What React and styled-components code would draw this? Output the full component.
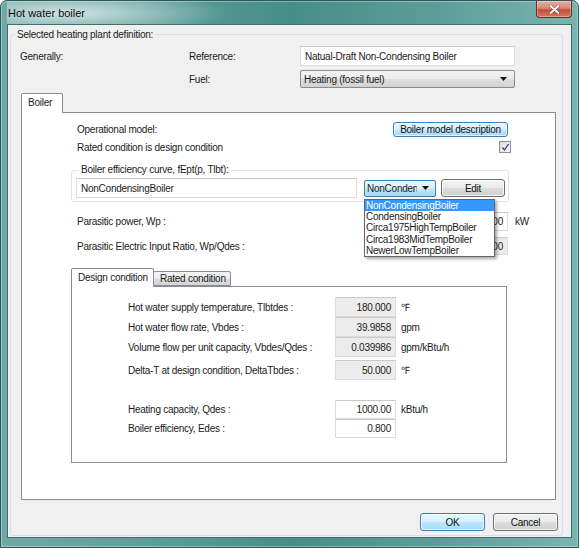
import React from 'react';
import styled, { createGlobalStyle } from 'styled-components';

const GlobalStyle = createGlobalStyle`
  html, body {
    margin: 0;
    padding: 0;
    background: #ffffff;
  }
  body {
    font-family: "Liberation Sans", Arial, sans-serif;
    font-size: 10px;
    letter-spacing: -0.25px;
    color: #1b1b1b;
  }
  * {
    box-sizing: border-box;
  }
`;

const Window = styled.div`
  width: 579px;
  height: 548px;
  display: flex;
  flex-direction: column;
  padding: 0 6px 9px 6px;
  border: 1px solid #2b5856;
  border-radius: 7px 7px 0 0;
  background: linear-gradient(90deg, #6fa9a6 0%, #5f9f9b 25%, #468d87 50%, #5d9d99 75%, #79b4b1 100%);
  box-shadow: inset 0 0 0 1px rgba(255, 255, 255, 0.35);
`;

const TitleBar = styled.div`
  height: 23px;
  display: flex;
  align-items: center;
  justify-content: space-between;
  background: radial-gradient(ellipse 160px 22px at 60px 12px, rgba(226, 238, 237, 0.85), rgba(226, 238, 237, 0) 100%);
`;

const Title = styled.span`
  padding-left: 1px;
  font-size: 11px;
  letter-spacing: 0;
  color: #0c0c0c;
`;

const CloseButton = styled.div`
  width: 36px;
  height: 17px;
  margin-top: -6px;
  display: flex;
  align-items: center;
  justify-content: center;
  border: 1px solid #6e2a1f;
  border-top: none;
  border-radius: 0 0 4px 4px;
  background: linear-gradient(#e6b0a4 0%, #d58875 45%, #c2503b 55%, #d4775f 100%);
  box-shadow: inset 0 0 0 1px rgba(255, 255, 255, 0.35);
`;

const Client = styled.div`
  flex: 1;
  display: flex;
  padding: 3px 8px 1px 2px;
  border: 1px solid #3f6e6c;
  background: #f0f0f0;
`;

const GroupBox = styled.fieldset`
  flex: 1;
  min-width: 0;
  margin: 0;
  padding: ${props => props.$padding || '0'};
  display: flex;
  flex-direction: column;
  border: 1px solid ${props => props.$line || '#d5dfe5'};
  border-radius: 3px;
`;

const Legend = styled.legend`
  margin-left: ${props => props.$offset || 4}px;
  padding: 0 2px;
  line-height: ${props => props.$lineHeight || 13}px;
  color: #1b1b1b;
`;

const HeaderGrid = styled.div`
  display: grid;
  grid-template-columns: 169px 111px 215px;
  grid-template-rows: 20px 18px;
  row-gap: 4px;
  align-items: center;
  margin: 5px 0 0 9px;
`;

const TextField = styled.div`
  height: ${props => props.$height || 20}px;
  width: ${props => (props.$width ? `${props.$width}px` : '100%')};
  display: flex;
  align-items: center;
  justify-content: ${props => (props.$right ? 'flex-end' : 'flex-start')};
  padding: 0 4px;
  border: 1px solid #dcdcdc;
  border-top-color: #c9c9c9;
  background: ${props => (props.$readOnly ? '#ececec' : '#ffffff')};
  white-space: nowrap;
  overflow: hidden;
`;

const SelectBox = styled.div`
  height: 18px;
  display: flex;
  align-items: center;
  justify-content: space-between;
  padding: 0 7px 0 3px;
  border: 1px solid #8b8b8b;
  border-radius: 2px;
  background: linear-gradient(#f4f4f4 0%, #ebebeb 48%, #dedede 52%, #d2d2d2 100%);
`;

const Arrow = () => (
  <svg width="7" height="4" viewBox="0 0 7 4">
    <path d="M0 0 H7 L3.5 4 Z" fill="#111" />
  </svg>
);

const TabControl = styled.div`
  display: flex;
  flex-direction: column;
  flex: ${props => (props.$fill ? 1 : 'none')};
  margin: ${props => props.$margin};
`;

const TabStrip = styled.div`
  height: ${props => props.$height}px;
  display: flex;
  align-items: flex-end;
`;

const Tab = styled.div`
  position: relative;
  z-index: ${props => (props.$active ? 1 : 0)};
  width: ${props => props.$width}px;
  height: ${props => (props.$active ? props.$height + 1 : props.$height - 3)}px;
  margin-bottom: ${props => (props.$active ? -1 : 0)}px;
  margin-left: ${props => (props.$active ? 0 : -1)}px;
  display: flex;
  align-items: center;
  padding: 0 0 ${props => (props.$active ? 2 : 0)}px 6px;
  border: 1px solid #898c95;
  border-bottom: ${props => (props.$active ? 'none' : '1px solid #898c95')};
  border-radius: 2px 2px 0 0;
  background: ${props => (props.$active ? '#ffffff' : 'linear-gradient(#f4f4f4 0%, #ebebeb 50%, #dddddd 51%, #d6d6d6 100%)')};
  color: #1b1b1b;
`;

const TabPanel = styled.div`
  flex: ${props => (props.$fill ? 1 : 'none')};
  height: ${props => (props.$height ? `${props.$height}px` : 'auto')};
  display: flex;
  flex-direction: column;
  padding: ${props => props.$padding};
  border: 1px solid #898c95;
  background: #ffffff;
`;

const Row = styled.div`
  height: ${props => props.$height}px;
  margin-top: ${props => props.$top}px;
  display: flex;
  align-items: center;
  justify-content: space-between;
`;

const Label = styled.span`
  margin-left: 6px;
  white-space: nowrap;
`;

const Button = styled.div`
  width: ${props => props.$width}px;
  height: ${props => props.$height || 18}px;
  margin-right: ${props => props.$right || 0}px;
  display: flex;
  align-items: center;
  justify-content: center;
  border: 1px solid ${props => (props.$focused ? '#3c7fb1' : '#707070')};
  border-radius: 3px;
  background: ${props => (props.$focused
    ? 'linear-gradient(#eaf6fd 0%, #d9f0fc 48%, #bee6fd 52%, #a7d9f5 100%)'
    : 'linear-gradient(#f2f2f2 0%, #ebebeb 48%, #dddddd 52%, #cfcfcf 100%)')};
  box-shadow: inset 0 0 0 1px rgba(255, 255, 255, 0.7);
  color: #111;
  white-space: nowrap;
`;

const CheckBox = styled.div`
  width: 12px;
  height: 12px;
  margin-right: -2px;
  display: flex;
  align-items: center;
  justify-content: center;
  border: 1px solid #8f8f8f;
  background: linear-gradient(135deg, #dcdcdc 0%, #f6f6f6 100%);
`;

const CurveRow = styled.div`
  display: flex;
  align-items: center;
  gap: 0;
  height: 20px;
`;

const ComboWrap = styled.div`
  position: relative;
  width: 72px;
  height: 17px;
  margin-left: 7px;
`;

const Combo = styled.div`
  height: 100%;
  display: flex;
  align-items: center;
  justify-content: space-between;
  padding: 0 6px 0 2px;
  border: 1px solid #3c7fb1;
  border-radius: 2px;
  background: linear-gradient(#eaf6fd 0%, #d9f0fc 48%, #bee6fd 52%, #a7d9f5 100%);
  overflow: hidden;
  white-space: nowrap;
`;

const ComboText = styled.span`
  width: 50px;
  overflow: hidden;
`;

const DropList = styled.div`
  position: absolute;
  top: 19px;
  left: 0;
  z-index: 10;
  width: 131px;
  border: 1px solid #646464;
  background: #ffffff;
  box-shadow: 2px 2px 3px rgba(0, 0, 0, 0.35);
`;

const DropItem = styled.div`
  height: 11.4px;
  line-height: 11.4px;
  padding-left: 1px;
  background: ${props => (props.$selected ? '#3399ff' : 'transparent')};
  color: ${props => (props.$selected ? '#ffffff' : '#1b1b1b')};
  white-space: nowrap;
`;

const ParamRow = styled.div`
  height: ${props => props.$height}px;
  margin-top: ${props => props.$top}px;
  margin-right: -26px;
  display: flex;
  align-items: center;
`;

const ParamLabel = styled(Label)`
  flex: 1;
`;

const Unit = styled.span`
  width: ${props => props.$width || 20}px;
  margin-left: ${props => props.$gap || 7}px;
  white-space: nowrap;
`;

const DataRow = styled.div`
  height: ${props => props.$height || 20}px;
  margin-top: ${props => props.$top || 0}px;
  display: flex;
  align-items: center;
  padding-left: 56px;
`;

const DataLabel = styled.span`
  width: 207px;
  white-space: nowrap;
`;

const FooterRow = styled.div`
  display: flex;
  justify-content: flex-end;
  gap: 8px;
  margin-top: 13px;
  padding: 0 4px 4px 0;
`;

const curves = [
  'NonCondensingBoiler',
  'CondensingBoiler',
  'Circa1975HighTempBoiler',
  'Circa1983MidTempBoiler',
  'NewerLowTempBoiler'
];

const design = [
  { label: 'Hot water supply temperature, Tlbtdes :', value: '180.000', unit: '℉', readOnly: true },
  { label: 'Hot water flow rate, Vbdes :', value: '39.9858', unit: 'gpm', readOnly: true },
  { label: 'Volume flow per unit capacity, Vbdes/Qdes :', value: '0.039986', unit: 'gpm/kBtu/h', readOnly: true },
  { label: 'Delta-T at design condition, DeltaTbdes :', value: '50.000', unit: '℉', readOnly: true, top: 3 },
  { label: 'Heating capacity, Qdes :', value: '1000.00', unit: 'kBtu/h', top: 20, height: 19 },
  { label: 'Boiler efficiency, Edes :', value: '0.800', unit: '', height: 19 }
];

export default function App() {
  return (
    <>
      <GlobalStyle />
      <Window>
        <TitleBar>
          <Title>Hot water boiler</Title>
          <CloseButton>
            <svg width="11" height="9" viewBox="0 0 11 9">
              <path d="M1.5 1 L9.5 8 M9.5 1 L1.5 8" stroke="#5a1c14" strokeWidth="3" strokeLinecap="round" opacity="0.5" />
              <path d="M1.5 1 L9.5 8 M9.5 1 L1.5 8" stroke="#ffffff" strokeWidth="1.8" strokeLinecap="round" />
            </svg>
          </CloseButton>
        </TitleBar>
        <Client>
          <GroupBox>
            <Legend>Selected heating plant definition:</Legend>
            <HeaderGrid>
              <span>Generally:</span>
              <span>Reference:</span>
              <TextField>Natual-Draft Non-Condensing Boiler</TextField>
              <span />
              <span>Fuel:</span>
              <SelectBox>
                <span>Heating (fossil fuel)</span>
                <Arrow />
              </SelectBox>
            </HeaderGrid>

            <TabControl $fill $margin="5px 6px 0 10px">
              <TabStrip $height={19}>
                <Tab $active $width={42} $height={19}>Boiler</Tab>
              </TabStrip>
              <TabPanel $fill $padding="0 46px 0 49px">
                <Row $height={15} $top={9}>
                  <Label>Operational model:</Label>
                  <Button $focused $width={115} $height={15} $right={1}>Boiler model description</Button>
                </Row>
                <Row $height={12} $top={4}>
                  <Label>Rated condition is design condition</Label>
                  <CheckBox>
                    <svg width="9" height="9" viewBox="0 0 9 9">
                      <path d="M1.5 4.5 L3.5 7 L7.5 1" fill="none" stroke="#2b3f7c" strokeWidth="1.3" />
                    </svg>
                  </CheckBox>
                </Row>

                <div style={{ marginTop: 11, display: 'flex' }}>
                  <GroupBox $padding="2px 2px 3px 4px" $line="#dde3e8">
                    <Legend $offset={3} $lineHeight={12}>Boiler efficiency curve, fEpt(p, Tlbt):</Legend>
                    <CurveRow>
                      <TextField $width={281}>NonCondensingBoiler</TextField>
                      <ComboWrap>
                        <Combo>
                          <ComboText>NonCondensingBoiler</ComboText>
                          <Arrow />
                        </Combo>
                        <DropList>
                          {curves.map((c, i) => (
                            <DropItem key={c} $selected={i === 0}>{c}</DropItem>
                          ))}
                        </DropList>
                      </ComboWrap>
                      <Button $width={64} $height={18} style={{ marginLeft: 5 }}>Edit</Button>
                    </CurveRow>
                  </GroupBox>
                </div>

                <ParamRow $height={19} $top={10}>
                  <ParamLabel>Parasitic power, Wp :</ParamLabel>
                  <TextField $width={60} $height={19} $right>0.00</TextField>
                  <Unit>kW</Unit>
                </ParamRow>
                <ParamRow $height={18} $top={6}>
                  <ParamLabel>Parasitic Electric Input Ratio, Wp/Qdes :</ParamLabel>
                  <TextField $width={60} $height={18} $right $readOnly>0.000</TextField>
                  <Unit />
                </ParamRow>

                <TabControl $margin="13px 2px 0 0">
                  <TabStrip $height={18}>
                    <Tab $active $width={83} $height={18}>Design condition</Tab>
                    <Tab $width={78} $height={18}>Rated condition</Tab>
                  </TabStrip>
                  <TabPanel $height={177} $padding="10px 0 0 0">
                    {design.map(d => (
                      <DataRow key={d.label} $top={d.top} $height={d.height}>
                        <DataLabel>{d.label}</DataLabel>
                        <TextField $width={61} $height={d.height || 20} $right $readOnly={d.readOnly}>{d.value}</TextField>
                        <Unit $width={80} $gap={5}>{d.unit}</Unit>
                      </DataRow>
                    ))}
                  </TabPanel>
                </TabControl>
              </TabPanel>
            </TabControl>

            <FooterRow>
              <Button $focused $width={65}>OK</Button>
              <Button $width={65}>Cancel</Button>
            </FooterRow>
          </GroupBox>
        </Client>
      </Window>
    </>
  );
}
